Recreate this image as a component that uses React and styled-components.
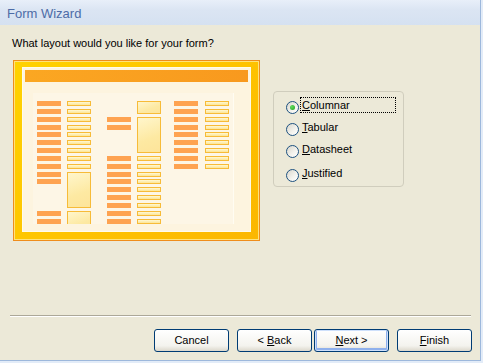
import React from 'react';
import styled, { createGlobalStyle } from 'styled-components';

const GlobalStyle = createGlobalStyle`
  html, body {
    margin: 0;
    padding: 0;
    background: #e3ecf8;
  }
  body {
    font-family: "Liberation Sans", Arial, sans-serif;
  }
`;

const Window = styled.div`
  width: 481px;
  height: 361px;
  box-sizing: border-box;
  border-right: 1px solid #9db8dc;
  border-bottom: 1px solid #9db8dc;
  background: #ece9d8;
  display: flex;
  flex-direction: column;
`;

const TitleBar = styled.div`
  height: 25px;
  box-sizing: border-box;
  padding: 2px 0 0 7px;
  line-height: 23px;
  font-size: 13px;
  color: #4d6ca7;
  background: linear-gradient(#e8eff9, #dbe5f3 40%, #d5e1f1);
`;

const Body = styled.div`
  flex: 1;
  display: flex;
  flex-direction: column;
  padding: 12px 0 8px 10px;
`;

const Prompt = styled.div`
  margin-left: 2px;
  font-size: 11px;
  line-height: 13px;
  color: #000;
`;

const MainRow = styled.div`
  display: flex;
  align-items: flex-start;
  margin: 10px 0 0 3px;
`;

const Preview = styled.div`
  width: 247px;
  height: 181px;
  box-sizing: border-box;
  padding: 6px 8px 8px 8px;
  border: 1px solid #ef8d1c;
  box-shadow: inset 0 0 0 1px #ffe27a;
  background: linear-gradient(135deg, #ffd200, #fec300 55%, #fbb700);
`;

const Canvas = styled.div`
  height: 100%;
  box-sizing: border-box;
  padding: 2px;
  border: 1px solid #fffbea;
  background: #fdf4df;
`;

const HeaderBar = styled.div`
  height: 12px;
  background: linear-gradient(to right, #fba722, #f8991e);
`;

const Panel = styled.div`
  width: 201px;
  height: 131px;
  box-sizing: border-box;
  margin: 11px 0 0 8px;
  padding: 8px 0 0 4px;
  overflow: hidden;
  background: #fdf6e6;
  border-right: 1px solid #fffcf2;
`;

const FormGrid = styled.div`
  display: grid;
  grid-template-columns: 24px 6px 24px 16px 24px 6px 24px 13px 24px 7px 24px;
  grid-auto-rows: 5px;
  row-gap: 2.85px;
`;

const Label = styled.div`
  grid-column: ${(p) => p.$col};
  grid-row: ${(p) => p.$row} / span 1;
  background: #fea351;
`;

const Field = styled.div`
  grid-column: ${(p) => p.$col};
  grid-row: ${(p) => p.$row} / span ${(p) => p.$span};
  box-sizing: border-box;
  border: 1px solid #f7bb38;
  background: ${(p) =>
    p.$span > 1
      ? 'linear-gradient(160deg, #fff6cc, #fde9a2 60%, #fde49a)'
      : 'linear-gradient(#fff8d4, #fde594)'};
`;

const RadioBox = styled.div`
  width: 131px;
  box-sizing: border-box;
  margin: 31px 0 0 13px;
  padding: 5px 0 4px 12px;
  border: 1px solid #d0cdbd;
  border-radius: 4px;
  display: flex;
  flex-direction: column;
  gap: 5px;
`;

const RadioRow = styled.div`
  display: flex;
  align-items: flex-start;
  margin-top: ${(p) => (p.$extra ? '2px' : '0')};
`;

const Circle = styled.div`
  width: 13px;
  height: 13px;
  margin-top: 4px;
  flex: none;
  box-sizing: border-box;
  border-radius: 50%;
  border: 1px solid #1c5180;
  background: linear-gradient(135deg, #d9d6cc, #f4f3ee 60%, #ffffff);
  display: flex;
  align-items: center;
  justify-content: center;
`;

const Dot = styled.div`
  width: 5px;
  height: 5px;
  border-radius: 50%;
  background: radial-gradient(circle at 35% 35%, #62dc5e, #21a121);
`;

const RadioLabel = styled.div`
  margin-left: 1px;
  height: 16px;
  box-sizing: border-box;
  padding: 0 2px;
  font-size: 11px;
  line-height: 16px;
  color: #000;
  ${(p) => p.$focused && 'width: 96px; border: 1px dotted #000; padding: 0 1px; line-height: 14px;'}
`;

const Key = styled.span`
  text-decoration: underline;
`;

const Separator = styled.div`
  margin: auto 9px 12px 0;
  border-top: 1px solid #aca899;
  border-bottom: 1px solid #ffffff;
`;

const ButtonRow = styled.div`
  display: flex;
  justify-content: flex-end;
  gap: 8px;
  padding-right: 8px;
`;

const ButtonPair = styled.div`
  display: flex;
  gap: 2px;
`;

const Button = styled.div`
  width: 75px;
  height: 23px;
  box-sizing: border-box;
  border: 1px solid #003c74;
  border-radius: 3px;
  background: linear-gradient(#ffffff, #f4f3ee 75%, #dcd8cc);
  font-size: 11px;
  line-height: 21px;
  text-align: center;
  color: #000;
  box-shadow: ${(p) =>
    p.$default ? 'inset 0 0 0 1px #cee0fb, inset 0 -1px 0 2px #8fb0ec' : 'none'};
`;

const range = (a, b) => Array.from({ length: b - a + 1 }, (_, i) => a + i);

const labels = [
  ...range(1, 11).map((r) => ({ col: 1, row: r })),
  { col: 1, row: 15 },
  { col: 1, row: 16 },
  { col: 5, row: 3 },
  { col: 5, row: 4 },
  ...range(8, 16).map((r) => ({ col: 5, row: r })),
  ...range(1, 9).map((r) => ({ col: 9, row: r })),
];

const fields = [
  ...range(1, 9).map((r) => ({ col: 3, row: r, span: 1 })),
  { col: 3, row: 10, span: 5 },
  { col: 3, row: 15, span: 3 },
  { col: 7, row: 1, span: 2 },
  { col: 7, row: 3, span: 5 },
  ...range(8, 16).map((r) => ({ col: 7, row: r, span: 1 })),
  ...range(1, 9).map((r) => ({ col: 11, row: r, span: 1 })),
];

const layouts = [
  { key: 'C', rest: 'olumnar', checked: true },
  { key: 'T', rest: 'abular' },
  { key: 'D', rest: 'atasheet' },
  { key: 'J', rest: 'ustified', extra: true },
];

export default function App() {
  return (
    <>
      <GlobalStyle />
      <Window>
        <TitleBar>Form Wizard</TitleBar>
        <Body>
          <Prompt>What layout would you like for your form?</Prompt>
          <MainRow>
            <Preview>
              <Canvas>
                <HeaderBar />
                <Panel>
                  <FormGrid>
                    {labels.map((l, i) => (
                      <Label key={'l' + i} $col={l.col} $row={l.row} />
                    ))}
                    {fields.map((f, i) => (
                      <Field key={'f' + i} $col={f.col} $row={f.row} $span={f.span} />
                    ))}
                  </FormGrid>
                </Panel>
              </Canvas>
            </Preview>
            <RadioBox>
              {layouts.map((o) => (
                <RadioRow key={o.key} $extra={o.extra}>
                  <Circle>{o.checked && <Dot />}</Circle>
                  <RadioLabel $focused={o.checked}>
                    <Key>{o.key}</Key>
                    {o.rest}
                  </RadioLabel>
                </RadioRow>
              ))}
            </RadioBox>
          </MainRow>
          <Separator />
          <ButtonRow>
            <Button>Cancel</Button>
            <ButtonPair>
              <Button>
                &lt; <Key>B</Key>ack
              </Button>
              <Button $default>
                <Key>N</Key>ext &gt;
              </Button>
            </ButtonPair>
            <Button>
              <Key>F</Key>inish
            </Button>
          </ButtonRow>
        </Body>
      </Window>
    </>
  );
}
